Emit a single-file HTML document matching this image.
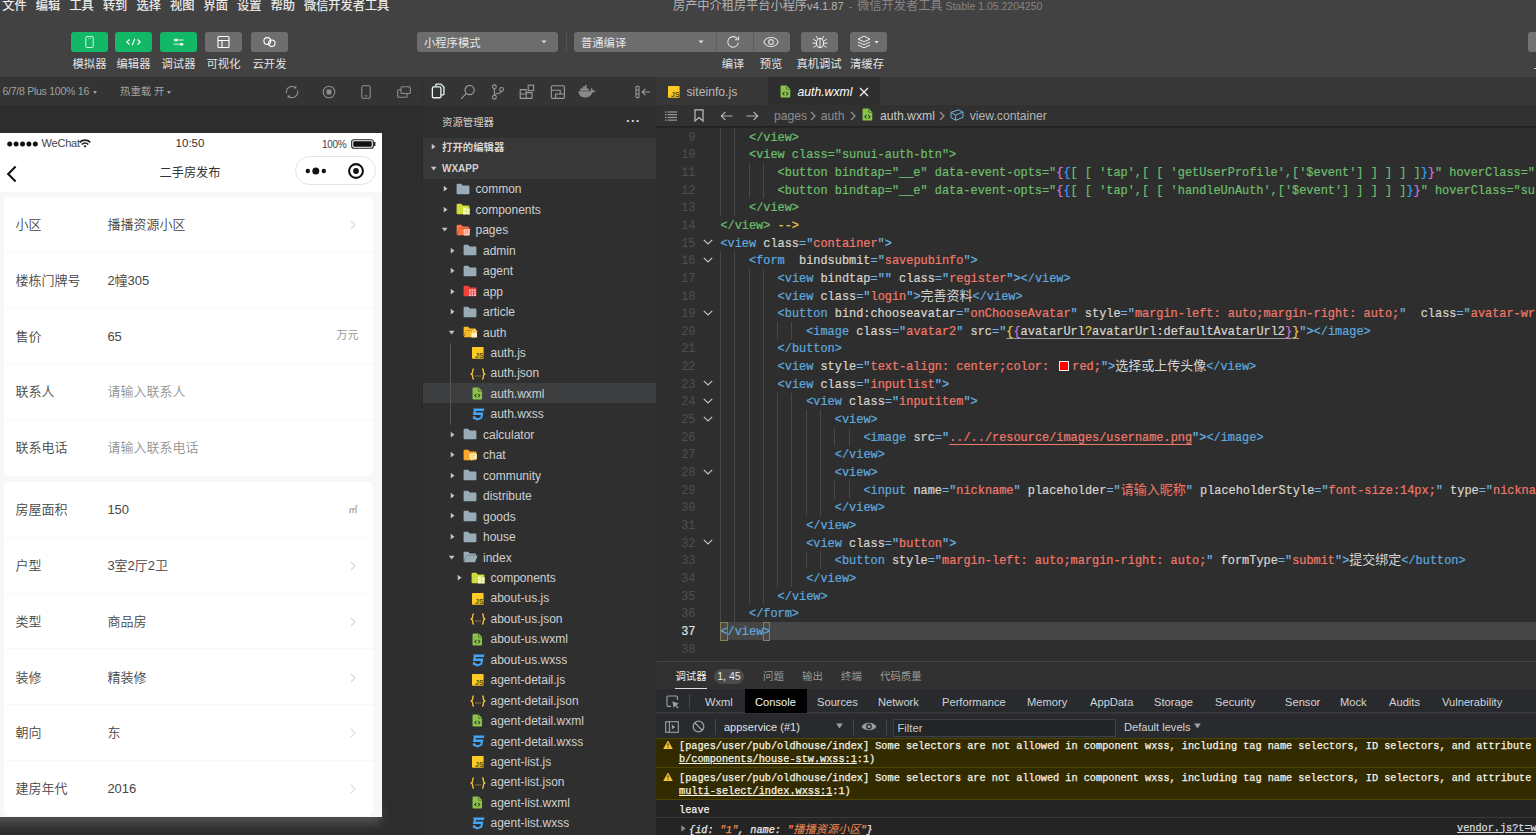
<!DOCTYPE html>
<html lang="zh-CN"><head><meta charset="utf-8"><title>微信开发者工具</title>
<style>
*{box-sizing:border-box;margin:0;padding:0}
html,body{width:1536px;height:835px;overflow:hidden;background:#2e2e2e}
body{position:relative;font-family:"Liberation Sans","Noto Sans CJK SC",sans-serif;font-size:12px;color:#ccc;-webkit-font-smoothing:antialiased}
.abs{position:absolute}
.t{position:absolute;white-space:nowrap;line-height:1}
svg{position:absolute;overflow:visible}
/* top */
#topbar{left:0;top:0;width:1536px;height:77px;background:#424242}
.menu{top:-1.4px;-webkit-text-stroke-width:0.2px;font-size:12.2px;color:#f0f0f0;line-height:14px}
.tbtn{top:32px;height:20px;border-radius:3px;background:#12b865}
.tbtn.g{background:#6e6e6e}
.tlab{top:57px;font-size:11.3px;color:#e4e4e4;line-height:14px;text-align:center}
.sel{top:32px;height:20px;border-radius:3px;background:#6d6d6d}
/* sim */
#simbar{left:0;top:77px;width:422px;height:28px;background:#343434}
#simbg{left:0;top:105px;width:422px;height:730px;background:#2d2d2d}
#phone{left:0;top:133px;width:382px;height:684.3px;background:#f7f7f7;overflow:hidden;color:#333}
.card{position:absolute;left:4.4px;width:368.6px;background:#fff;border-radius:5px}
.row{position:absolute;left:0;width:369px;height:55.7px}
.row .l{position:absolute;left:11px;top:0;line-height:55.7px;font-size:13px;color:#464646;font-weight:350}
.row .v{position:absolute;left:103px;top:0;line-height:55.7px;font-size:13px;color:#464646;font-weight:350}
.row .v.ph{color:#939393}
.row .u{position:absolute;right:15px;top:-1px;line-height:55.7px;font-size:11px;color:#999}
.row .sep{position:absolute;left:0;right:0;bottom:0.3px;height:1px;background:#f7f7f7}
/* tree */
#explorer{left:423px;top:77px;width:233px;height:758px;background:#2f2f2f}
.trow{position:absolute;left:0;width:233px;height:20.45px}
.trow .n{position:absolute;top:0;line-height:20.45px;font-size:12px;color:#d0d0d0;white-space:nowrap}
/* editor */
#tabs{left:656px;top:77px;width:880px;height:27.7px;background:#373737}
#crumbs{left:656px;top:104.5px;width:880px;height:21.5px;background:#313131}
#code{left:656px;top:127.9px;width:880px;height:532px;background:#2e2e2e;overflow:hidden}
.ln{position:absolute;left:0;width:880px;height:17.65px;line-height:17.65px;font-family:"Liberation Mono",monospace;font-size:11.915px;white-space:pre;color:#d4d4d4}
.ln .no{position:absolute;left:0;top:1.8px;width:39.5px;text-align:right;color:#4e4e4e}
.ln .cd{position:absolute;left:65px;top:1.8px;-webkit-text-stroke-width:0.22px}
.ln .cj{font-family:"Noto Sans CJK SC",sans-serif;font-size:13px;line-height:1px;-webkit-text-stroke-width:0}
.c{color:#6cbd6c}.tg{color:#5ea8de}.at{color:#d6d4cc}.st{color:#f0786a}.pu{color:#6fb4e4}
.b1{color:#e6c84a}.b2{color:#d670d6}.b3{color:#2f9fff}
.ul{text-decoration:underline;text-underline-offset:2.5px;text-decoration-thickness:1.4px}
.gd{position:absolute;top:0;width:1px;height:17.65px;background:#484848}
/* debug */
#dbg{left:656px;top:661px;width:880px;height:174px;background:#313131}
.mono{font-family:"Liberation Mono",monospace}
.bx{outline:1px solid #8a7d5c;outline-offset:-1px;background:#4a4a44;padding:2.6px 0 2px}
.car{display:inline-block;width:0;height:0;border-left:2.7px solid transparent;border-right:2.7px solid transparent;border-top:3.4px solid #a0a0a0;vertical-align:1px}

</style></head>
<body>
<div id="topbar" class="abs">
<span class="t menu" style="left:2.3px">文件</span>
<span class="t menu" style="left:35.8px">编辑</span>
<span class="t menu" style="left:69.4px">工具</span>
<span class="t menu" style="left:102.9px">转到</span>
<span class="t menu" style="left:136.5px">选择</span>
<span class="t menu" style="left:170.1px">视图</span>
<span class="t menu" style="left:203.6px">界面</span>
<span class="t menu" style="left:237.1px">设置</span>
<span class="t menu" style="left:270.7px">帮助</span>
<span class="t menu" style="left:304px">微信开发者工具</span>
<span class="t menu" style="left:673px;top:-1px;color:#b4b4b4;-webkit-text-stroke-width:0">房产中介租房平台小程序<span style="font-size:11.2px">v4.1.87</span><span style="color:#858585"> <span style="font-size:11px;padding:0 1.5px">-</span> 微信开发者工具<span style="font-size:10.5px"> Stable 1.05.2204250</span></span></span>
<div class="abs tbtn " style="left:71px;width:37px"><svg width="37" height="20" viewBox="0 0 37 20" style="left:0;top:0"><rect x="14.8" y="4.5" width="7.4" height="11" rx="1" fill="none" stroke="#d4f6e4" stroke-width="1"/><line x1="17" y1="6.4" x2="20" y2="6.4" stroke="#d4f6e4" stroke-width="0.7" opacity=".8"/></svg></div>
<span class="t tlab" style="left:61px;width:57px">模拟器</span>
<div class="abs tbtn " style="left:115px;width:37px"><svg width="37" height="20" viewBox="0 0 37 20" style="left:0;top:0"><path d="M14.5 7.5 L11.8 10 L14.5 12.5 M22.5 7.5 L25.2 10 L22.5 12.5 M19.8 6.8 L17.2 13.2" fill="none" stroke="#fff" stroke-width="1.1"/></svg></div>
<span class="t tlab" style="left:105px;width:57px">编辑器</span>
<div class="abs tbtn " style="left:160px;width:37px"><svg width="37" height="20" viewBox="0 0 37 20" style="left:0;top:0"><path d="M13.5 8 H23.5 M13.5 12.2 H23.5" fill="none" stroke="#d8f5e6" stroke-width="1"/><circle cx="16" cy="8" r="1.5" fill="#fff"/><circle cx="21.5" cy="12.2" r="1.5" fill="#fff"/></svg></div>
<span class="t tlab" style="left:150px;width:57px">调试器</span>
<div class="abs tbtn g" style="left:205px;width:37px"><svg width="37" height="20" viewBox="0 0 37 20" style="left:0;top:0"><rect x="13" y="4.5" width="11" height="11" rx="1" fill="none" stroke="#fff" stroke-width="1.1"/><path d="M13 8.5 H24 M17 8.5 V15.5" stroke="#fff" stroke-width="1.1" fill="none"/></svg></div>
<span class="t tlab" style="left:195px;width:57px">可视化</span>
<div class="abs tbtn g" style="left:251px;width:37px"><svg width="37" height="20" viewBox="0 0 37 20" style="left:0;top:0"><circle cx="16.3" cy="9" r="3.4" fill="none" stroke="#fff" stroke-width="1.1"/><circle cx="20.8" cy="11.2" r="3.2" fill="none" stroke="#fff" stroke-width="1.1"/></svg></div>
<span class="t tlab" style="left:241px;width:57px">云开发</span>
<div class="abs sel" style="left:417px;width:141px"></div>
<span class="t" style="left:424px;top:36px;font-size:11.3px;line-height:14px;color:#e6e6e6">小程序模式</span>
<svg width="6.4" height="4" viewBox="0 0 8 5" style="left:540.8px;top:40.3px"><path d="M0.5 0.5 L7 0.5 L3.75 4.2 Z" fill="#e0e0e0"/></svg>
<div class="abs" style="left:565.5px;top:32px;width:1px;height:20px;background:#545454"></div>
<div class="abs sel" style="left:574px;width:216px"></div>
<span class="t" style="left:581px;top:36px;font-size:11.3px;line-height:14px;color:#e6e6e6">普通编译</span>
<svg width="6.4" height="4" viewBox="0 0 8 5" style="left:698px;top:40.3px"><path d="M0.5 0.5 L7 0.5 L3.75 4.2 Z" fill="#e0e0e0"/></svg>
<div class="abs" style="left:715.5px;top:32px;width:1px;height:20px;background:#5e5e5e"></div>
<div class="abs" style="left:753px;top:32px;width:1px;height:20px;background:#5e5e5e"></div>
<svg width="16" height="16" viewBox="0 0 16 16" style="left:725px;top:34px"><path d="M12.6 5.2 A5.3 5.3 0 1 0 13.3 8.6" fill="none" stroke="#dcdcdc" stroke-width="1.1"/><path d="M13.6 2.2 V5.8 H10" fill="none" stroke="#dcdcdc" stroke-width="1.1"/></svg>
<svg width="18" height="14" viewBox="0 0 18 14" style="left:762px;top:35px"><path d="M1.8 7 C4.4 1 13.6 1 16.2 7 C13.6 13 4.4 13 1.8 7 Z" fill="none" stroke="#dcdcdc" stroke-width="1.1"/><circle cx="9" cy="7" r="2.4" fill="none" stroke="#dcdcdc" stroke-width="1.1"/></svg>
<span class="t tlab" style="left:713px;width:40px">编译</span>
<span class="t tlab" style="left:751px;width:40px">预览</span>
<div class="abs sel" style="left:801px;width:37px"></div>
<svg width="20" height="18" viewBox="0 0 20 18" style="left:809.5px;top:33px"><ellipse cx="10" cy="10" rx="3.6" ry="4.6" fill="none" stroke="#eee" stroke-width="1.1"/><path d="M10 5.5 V14.5 M6.4 8 L3.2 6.2 M6.4 10.2 H2.6 M6.5 12.4 L3.4 14.4 M13.6 8 L16.8 6.2 M13.6 10.2 H17.4 M13.5 12.4 L16.6 14.4 M7.6 5.6 L6.4 3.2 M12.4 5.6 L13.6 3.2" fill="none" stroke="#eee" stroke-width="1"/></svg>
<span class="t tlab" style="left:789px;width:60px">真机调试</span>
<div class="abs sel" style="left:849.5px;width:37px"></div>
<svg width="22" height="16" viewBox="0 0 22 16" style="left:855.5px;top:34px"><path d="M8 2.2 L14 5 L8 7.8 L2 5 Z" fill="none" stroke="#eee" stroke-width="1"/><path d="M2 8 L8 10.8 L14 8 M2 11 L8 13.8 L14 11" fill="none" stroke="#eee" stroke-width="1"/><path d="M18.6 7 L22.6 7 L20.6 9.4 Z" fill="#eee"/></svg>
<span class="t tlab" style="left:837px;width:60px">清缓存</span>
<div class="abs" style="left:1528px;top:32px;width:12px;height:20px;border-radius:3px;background:#727272"></div>
<div class="abs" style="left:1534px;top:67.6px;width:3px;height:1.4px;background:#d8d8d8"></div>
</div>
<div id="simbar" class="abs">
<span class="t" style="left:2.5px;top:8px;font-size:10.6px;line-height:13px;color:#a0a0a0;letter-spacing:-0.3px">6/7/8 Plus 100% 16<i class="car" style="margin-left:4px"></i></span>
<span class="t" style="left:120px;top:8px;font-size:10.4px;line-height:13px;color:#a0a0a0">热重载 开<i class="car" style="margin-left:3px"></i></span>
<svg width="14" height="14" viewBox="0 0 14 14" style="left:285px;top:8px"><path d="M1.6 8.4 A5.6 5.6 0 0 1 10.6 2.7 M12.4 5.6 A5.6 5.6 0 0 1 3.4 11.3" fill="none" stroke="#8c8c8c" stroke-width="1.2"/><path d="M8.4 3.4 L11.4 3.4 L11.2 0.6 Z M5.6 10.6 L2.6 10.6 L2.8 13.4 Z" fill="#8c8c8c"/></svg>
<svg width="14" height="14" viewBox="0 0 14 14" style="left:322px;top:8px"><circle cx="7" cy="7" r="5.8" fill="none" stroke="#8e8e8e" stroke-width="1.1"/><rect x="4.6" y="4.6" width="4.8" height="4.8" rx=".6" fill="#8e8e8e"/></svg>
<svg width="10" height="14" viewBox="0 0 10 14" style="left:361px;top:8px"><rect x="0.8" y="0.8" width="8.4" height="12.4" rx="1.3" fill="none" stroke="#8e8e8e" stroke-width="1.1"/><path d="M3.6 10.9 H6.4" stroke="#8e8e8e" stroke-width="1"/></svg>
<svg width="14" height="12" viewBox="0 0 14 12" style="left:396.5px;top:9px"><rect x="4" y="0.7" width="9.3" height="6.8" rx="1" fill="none" stroke="#8e8e8e" stroke-width="1.1"/><path d="M4 3.8 H1.7 A1 1 0 0 0 0.7 4.8 V10.3 A1 1 0 0 0 1.7 11.3 H9 A1 1 0 0 0 10 10.3 V7.5" fill="none" stroke="#8e8e8e" stroke-width="1.1"/></svg>
</div>
<div id="simbg" class="abs"></div>
<div class="abs" style="left:-20px;top:804px;width:401px;height:20px;background:#505050;filter:blur(5px)"></div>
<div class="abs" style="left:422px;top:105px;width:1px;height:730px;background:#282828"></div>
<div id="phone" class="abs">
<div class="abs" style="left:0;top:0;width:382px;height:59px;background:#fff"></div>
<svg width="34" height="6" viewBox="0 0 34 6" style="left:6.7px;top:7.6px"><circle cx="2.7" cy="3" r="2.5" fill="#111"/><circle cx="9.1" cy="3" r="2.5" fill="#111"/><circle cx="15.5" cy="3" r="2.5" fill="#111"/><circle cx="21.9" cy="3" r="2.5" fill="#111"/><circle cx="28.3" cy="3" r="2.5" fill="#111"/></svg>
<span class="t" style="left:41.5px;top:4px;font-size:11px;line-height:13px;color:#444;letter-spacing:-0.2px">WeChat</span>
<svg width="12" height="9" viewBox="0 0 12 9" style="left:79px;top:6px"><path d="M0.7 3.3 A7.6 7.6 0 0 1 11.3 3.3" fill="none" stroke="#222" stroke-width="1.8"/><path d="M2.7 5.5 A4.8 4.8 0 0 1 9.3 5.5" fill="none" stroke="#222" stroke-width="1.7"/><path d="M4.4 7 L6 8.8 L7.6 7 A2.4 2.4 0 0 0 4.4 7 Z" fill="#222"/></svg>
<span class="t" style="left:160px;width:60px;text-align:center;top:4px;font-size:11.5px;line-height:13px;color:#333">10:50</span>
<span class="t" style="left:322px;top:5px;font-size:10px;line-height:13px;color:#444;letter-spacing:-0.3px">100%</span>
<svg width="26" height="10" viewBox="0 0 26 10" style="left:351px;top:6px"><rect x="0.7" y="0.7" width="21.6" height="8.6" rx="2" fill="none" stroke="#222" stroke-width="1.1"/><rect x="2.3" y="2.3" width="18.4" height="5.4" rx=".8" fill="#111"/><path d="M23.6 3.5 V6.5" stroke="#222" stroke-width="1.6" stroke-linecap="round"/></svg>
<svg width="12" height="18" viewBox="0 0 12 18" style="left:5.5px;top:32px"><path d="M9.6 1.6 L2.2 9 L9.6 16.4" fill="none" stroke="#111" stroke-width="2.1"/></svg>
<span class="t" style="left:120px;width:140px;text-align:center;top:33px;font-size:12.2px;line-height:15px;color:#333">二手房发布</span>
<div class="abs" style="left:295px;top:22.5px;width:80.5px;height:29.5px;border:1px solid #e4e4e4;border-radius:15px;background:#fff"></div>
<svg width="22" height="8" viewBox="0 0 22 8" style="left:304.5px;top:33.7px"><circle cx="2.8" cy="4" r="2.2" fill="#111"/><circle cx="10.8" cy="4" r="3.5" fill="#111"/><circle cx="18.8" cy="4" r="2.2" fill="#111"/></svg>
<svg width="18" height="18" viewBox="0 0 18 18" style="left:346.8px;top:28.7px"><circle cx="9" cy="9" r="6.9" fill="none" stroke="#111" stroke-width="2.1"/><circle cx="9" cy="9" r="2.9" fill="#111"/></svg>
<div class="card" style="top:64.0px;height:278.5px">
<div class="row" style="top:0.3px"><span class="l">小区</span><span class="v">播播资源小区</span><svg width="6" height="10" viewBox="0 0 6 10" style="right:17px;top:23px;left:auto"><path d="M1 1 L5 5 L1 9" fill="none" stroke="#dcdcdc" stroke-width="1.3"/></svg><i class="sep"></i></div>
<div class="row" style="top:56.0px"><span class="l">楼栋门牌号</span><span class="v">2幢305</span><i class="sep"></i></div>
<div class="row" style="top:111.7px"><span class="l">售价</span><span class="v">65</span><span class="u">万元</span><i class="sep"></i></div>
<div class="row" style="top:167.4px"><span class="l">联系人</span><span class="v ph">请输入联系人</span><i class="sep"></i></div>
<div class="row" style="top:223.1px"><span class="l">联系电话</span><span class="v ph">请输入联系电话</span></div>
</div>
<div class="card" style="top:349.2px;height:334.2px">
<div class="row" style="top:0.3px"><span class="l">房屋面积</span><span class="v">150</span><span class="u" style="font-size:9px;color:#858585;right:16px;top:1px">㎡</span><i class="sep"></i></div>
<div class="row" style="top:56.0px"><span class="l">户型</span><span class="v">3室2厅2卫</span><svg width="6" height="10" viewBox="0 0 6 10" style="right:17px;top:23px;left:auto"><path d="M1 1 L5 5 L1 9" fill="none" stroke="#dcdcdc" stroke-width="1.3"/></svg><i class="sep"></i></div>
<div class="row" style="top:111.7px"><span class="l">类型</span><span class="v">商品房</span><svg width="6" height="10" viewBox="0 0 6 10" style="right:17px;top:23px;left:auto"><path d="M1 1 L5 5 L1 9" fill="none" stroke="#dcdcdc" stroke-width="1.3"/></svg><i class="sep"></i></div>
<div class="row" style="top:167.4px"><span class="l">装修</span><span class="v">精装修</span><svg width="6" height="10" viewBox="0 0 6 10" style="right:17px;top:23px;left:auto"><path d="M1 1 L5 5 L1 9" fill="none" stroke="#dcdcdc" stroke-width="1.3"/></svg><i class="sep"></i></div>
<div class="row" style="top:223.1px"><span class="l">朝向</span><span class="v">东</span><svg width="6" height="10" viewBox="0 0 6 10" style="right:17px;top:23px;left:auto"><path d="M1 1 L5 5 L1 9" fill="none" stroke="#dcdcdc" stroke-width="1.3"/></svg><i class="sep"></i></div>
<div class="row" style="top:278.8px"><span class="l">建房年代</span><span class="v">2016</span><svg width="6" height="10" viewBox="0 0 6 10" style="right:17px;top:23px;left:auto"><path d="M1 1 L5 5 L1 9" fill="none" stroke="#dcdcdc" stroke-width="1.3"/></svg></div>
</div>
</div>
<div id="explorer" class="abs">
<div class="abs" style="left:0;top:0;width:233px;height:28px;background:#343434"></div>
<svg width="14.5" height="16" viewBox="0 0 16 18" style="left:7.5px;top:5.8px"><path d="M5.2 3.8 V2.2 A1 1 0 0 1 6.2 1.2 H11 L14.4 4.6 V12.4 A1 1 0 0 1 13.4 13.4 H11.4" fill="none" stroke="#e6f2f4" stroke-width="1.5"/><rect x="1.4" y="4.4" width="9.6" height="12.2" rx="1.2" fill="none" stroke="#e6f2f4" stroke-width="1.5"/></svg>
<svg width="16" height="16" viewBox="0 0 16 16" style="left:37px;top:6.5px"><circle cx="9.6" cy="6" r="4.6" fill="none" stroke="#9a9a9a" stroke-width="1.2"/><path d="M6.4 9.4 L1.2 14.8" stroke="#9a9a9a" stroke-width="1.2"/></svg>
<svg width="14" height="16" viewBox="0 0 14 16" style="left:67.5px;top:6.5px"><circle cx="3.4" cy="2.8" r="1.9" fill="none" stroke="#9a9a9a" stroke-width="1.1"/><circle cx="3.4" cy="13.2" r="1.9" fill="none" stroke="#9a9a9a" stroke-width="1.1"/><circle cx="10.6" cy="5.4" r="1.9" fill="none" stroke="#9a9a9a" stroke-width="1.1"/><path d="M3.4 4.7 V11.3 M10.6 7.3 C10.6 10 3.4 9 3.4 11.3" fill="none" stroke="#9a9a9a" stroke-width="1.1"/></svg>
<svg width="16" height="16" viewBox="0 0 16 16" style="left:96px;top:6.5px"><path d="M1.2 5.6 H7.2 V14.4 H1.2 Z M7.2 8.6 H13 V14.4 H7.2 M1.2 10 H7.2" fill="none" stroke="#9a9a9a" stroke-width="1.1"/><rect x="9.2" y="1.2" width="5.4" height="5.4" fill="none" stroke="#9a9a9a" stroke-width="1.1"/></svg>
<svg width="16" height="16" viewBox="0 0 16 16" style="left:127px;top:6.5px"><rect x="1.4" y="1.8" width="13" height="12.6" rx="1" fill="none" stroke="#9a9a9a" stroke-width="1.1"/><path d="M1.4 6.2 H10.2 V10 H5.6 V14.4 M10.2 10 H14.4" fill="none" stroke="#9a9a9a" stroke-width="1.1"/></svg>
<svg width="18" height="13" viewBox="0 0 18 13" style="left:154.5px;top:7.5px"><path d="M0.5 6.2 H12.4 C12.8 5 12.6 3.8 13.6 2.8 C14.6 3.6 14.8 4.6 14.6 5.4 C15.6 5.2 16.8 5.4 17.6 6 C16.8 7.2 15.6 7.4 14.4 7.4 C13.2 10.6 10.6 12.4 6.8 12.4 C3 12.4 0.7 10 0.5 6.2 Z" fill="#8a8a8a"/><path d="M2.2 3.6 H10.8 V5.8 H2.2 Z M4.6 1.4 H8.6 V3.6 H4.6 Z M7.2 0 H8.8 V1.6 H7.2 Z" fill="#8a8a8a"/></svg>
<svg width="16" height="14" viewBox="0 0 16 14" style="left:211.5px;top:8px"><rect x="1" y="1.2" width="3" height="11.4" rx=".8" fill="none" stroke="#9a9a9a" stroke-width="1.1"/><path d="M1 5 H4 M1 8.8 H4" stroke="#9a9a9a" stroke-width="1"/><path d="M15 7 H7.4 M10.4 3.8 L7.2 7 L10.4 10.2" fill="none" stroke="#9a9a9a" stroke-width="1.2"/></svg>
<span class="t" style="left:19px;top:39px;font-size:10.4px;line-height:14px;color:#cfcfcf">资源管理器</span>
<span class="t" style="left:203px;top:38px;font-size:13px;line-height:12px;color:#d8d8d8;letter-spacing:0.6px;font-weight:bold">···</span>
<div class="abs" style="left:0;top:60.5px;width:233px;height:41px;background:#383838"></div>
<div class="trow" style="top:60.5px"><svg width="5.4" height="7.4" viewBox="0 0 6 8" style="left:7.5px;top:5.9px"><path d="M0.8 0.8 L5 4 L0.8 7.2 Z" fill="#c4c4c4"/></svg><span class="n" style="left:19px;font-size:10.4px;font-weight:bold;color:#d4d4d4">打开的编辑器</span></div>
<div class="trow" style="top:82px"><svg width="7.4" height="5.4" viewBox="0 0 8 6" style="left:6.5px;top:7px"><path d="M0.8 0.8 L7.2 0.8 L4 5 Z" fill="#c4c4c4"/></svg><span class="n" style="left:19px;font-size:10px;font-weight:bold;color:#d0d0d0">WXAPP</span></div>
<div class="trow" style="top:102.40px"><svg width="5.4" height="7.4" viewBox="0 0 6 8" style="left:19.5px;top:5.9px"><path d="M0.8 0.8 L5 4 L0.8 7.2 Z" fill="#c4c4c4"/></svg><svg width="14" height="12" viewBox="0 0 14 12" style="left:33px;top:3.6px"><path d="M0.6 1.8 A1 1 0 0 1 1.6 0.8 H5.2 L6.8 2.4 H12.4 A1 1 0 0 1 13.4 3.4 V10.2 A1 1 0 0 1 12.4 11.2 H1.6 A1 1 0 0 1 0.6 10.2 Z" fill="#98abb7"/></svg><span class="n" style="left:52.5px">common</span></div>
<div class="trow" style="top:122.85px"><svg width="5.4" height="7.4" viewBox="0 0 6 8" style="left:19.5px;top:5.9px"><path d="M0.8 0.8 L5 4 L0.8 7.2 Z" fill="#c4c4c4"/></svg><svg width="14" height="12" viewBox="0 0 14 12" style="left:33px;top:3.6px"><path d="M0.6 1.8 A1 1 0 0 1 1.6 0.8 H5.2 L6.8 2.4 H12.4 A1 1 0 0 1 13.4 3.4 V10.2 A1 1 0 0 1 12.4 11.2 H1.6 A1 1 0 0 1 0.6 10.2 Z" fill="#cddc39"/><path d="M7 4.6 H10.2 V7.6 H7 Z M10.6 5.6 H13.8 V8.8 H10.6 Z M7 8 H10.2 V11.6 H7 Z M10.6 9.2 H13.8 V11.6 H10.6 Z" fill="#f2f6c0"/></svg><span class="n" style="left:52.5px">components</span></div>
<div class="trow" style="top:143.30px"><svg width="7.4" height="5.4" viewBox="0 0 8 6" style="left:18.0px;top:7px"><path d="M0.8 0.8 L7.2 0.8 L4 5 Z" fill="#c4c4c4"/></svg><svg width="15" height="12" viewBox="0 0 15 12" style="left:33px;top:3.6px"><path d="M0.6 1.8 A1 1 0 0 1 1.6 0.8 H5.2 L6.8 2.4 H12 A1 1 0 0 1 13 3.4 V4.4 H3.6 L0.6 10.6 Z" fill="#ff7043"/><path d="M3.4 4.6 H14.6 L12.2 11.2 H0.8 Z" fill="#ff7043"/><rect x="7.6" y="5" width="6.2" height="6.6" rx=".8" fill="#ffccbc"/><path d="M8.8 7 H12.6 M8.8 9 H12.6" stroke="#ff7043" stroke-width=".9"/></svg><span class="n" style="left:52.5px">pages</span></div>
<div class="trow" style="top:163.75px"><svg width="5.4" height="7.4" viewBox="0 0 6 8" style="left:26.5px;top:5.9px"><path d="M0.8 0.8 L5 4 L0.8 7.2 Z" fill="#c4c4c4"/></svg><svg width="14" height="12" viewBox="0 0 14 12" style="left:40px;top:3.6px"><path d="M0.6 1.8 A1 1 0 0 1 1.6 0.8 H5.2 L6.8 2.4 H12.4 A1 1 0 0 1 13.4 3.4 V10.2 A1 1 0 0 1 12.4 11.2 H1.6 A1 1 0 0 1 0.6 10.2 Z" fill="#98abb7"/></svg><span class="n" style="left:60px">admin</span></div>
<div class="trow" style="top:184.20px"><svg width="5.4" height="7.4" viewBox="0 0 6 8" style="left:26.5px;top:5.9px"><path d="M0.8 0.8 L5 4 L0.8 7.2 Z" fill="#c4c4c4"/></svg><svg width="14" height="12" viewBox="0 0 14 12" style="left:40px;top:3.6px"><path d="M0.6 1.8 A1 1 0 0 1 1.6 0.8 H5.2 L6.8 2.4 H12.4 A1 1 0 0 1 13.4 3.4 V10.2 A1 1 0 0 1 12.4 11.2 H1.6 A1 1 0 0 1 0.6 10.2 Z" fill="#98abb7"/></svg><span class="n" style="left:60px">agent</span></div>
<div class="trow" style="top:204.65px"><svg width="5.4" height="7.4" viewBox="0 0 6 8" style="left:26.5px;top:5.9px"><path d="M0.8 0.8 L5 4 L0.8 7.2 Z" fill="#c4c4c4"/></svg><svg width="14" height="12" viewBox="0 0 14 12" style="left:40px;top:3.6px"><path d="M0.6 1.8 A1 1 0 0 1 1.6 0.8 H5.2 L6.8 2.4 H12.4 A1 1 0 0 1 13.4 3.4 V10.2 A1 1 0 0 1 12.4 11.2 H1.6 A1 1 0 0 1 0.6 10.2 Z" fill="#f4433c"/><path d="M6 4.6 H12.8 V11 H6 Z" fill="#ffcdd2"/><path d="M6 6.7 H12.8 M6 8.9 H12.8 M8.2 4.6 V11 M10.5 4.6 V11" stroke="#f4433c" stroke-width=".9"/></svg><span class="n" style="left:60px">app</span></div>
<div class="trow" style="top:225.10px"><svg width="5.4" height="7.4" viewBox="0 0 6 8" style="left:26.5px;top:5.9px"><path d="M0.8 0.8 L5 4 L0.8 7.2 Z" fill="#c4c4c4"/></svg><svg width="14" height="12" viewBox="0 0 14 12" style="left:40px;top:3.6px"><path d="M0.6 1.8 A1 1 0 0 1 1.6 0.8 H5.2 L6.8 2.4 H12.4 A1 1 0 0 1 13.4 3.4 V10.2 A1 1 0 0 1 12.4 11.2 H1.6 A1 1 0 0 1 0.6 10.2 Z" fill="#98abb7"/></svg><span class="n" style="left:60px">article</span></div>
<div class="trow" style="top:245.55px"><svg width="7.4" height="5.4" viewBox="0 0 8 6" style="left:25.0px;top:7px"><path d="M0.8 0.8 L7.2 0.8 L4 5 Z" fill="#c4c4c4"/></svg><svg width="15" height="12" viewBox="0 0 15 12" style="left:40px;top:3.6px"><path d="M0.6 1.8 A1 1 0 0 1 1.6 0.8 H5.2 L6.8 2.4 H12 A1 1 0 0 1 13 3.4 V4.4 H3.6 L0.6 10.6 Z" fill="#f9b72a"/><path d="M3.4 4.6 H14.6 L12.2 11.2 H0.8 Z" fill="#f9b72a"/><rect x="8.4" y="6.8" width="5.6" height="4.8" rx=".6" fill="#fff3c4"/><path d="M9.6 6.8 V5.6 A1.6 1.6 0 0 1 12.8 5.6 V6.8" fill="none" stroke="#fff3c4" stroke-width="1"/></svg><span class="n" style="left:60px">auth</span></div>
<div class="trow" style="top:266.00px"><svg width="12" height="12" viewBox="0 0 12 12" style="left:48.5px;top:4.2px"><rect x="0" y="0" width="11.6" height="11.8" rx=".8" fill="#ffca28"/><text x="3" y="10.6" font-family="Liberation Sans,sans-serif" font-size="7" font-weight="bold" fill="#5a4700">JS</text></svg><span class="n" style="left:67.5px">auth.js</span></div>
<div class="trow" style="top:286.45px"><svg width="16" height="12" viewBox="0 0 16 12" style="left:46.5px;top:4.2px"><path d="M4 0.8 C2.2 0.8 2.8 3 2.6 4.4 C2.5 5.4 1.6 5.8 0.8 6 C1.6 6.2 2.5 6.6 2.6 7.6 C2.8 9 2.2 11.2 4 11.2 M12 0.8 C13.8 0.8 13.2 3 13.4 4.4 C13.5 5.4 14.4 5.8 15.2 6 C14.4 6.2 13.5 6.6 13.4 7.6 C13.2 9 13.8 11.2 12 11.2" fill="none" stroke="#f5bf36" stroke-width="1.3"/><path d="M5.4 8 H6.4 M7.5 8 H8.5 M9.6 8 H10.6" stroke="#f5bf36" stroke-width="1.2"/></svg><span class="n" style="left:67.5px">auth.json</span></div>
<div class="abs" style="left:0;top:305.80px;width:233px;height:20.6px;background:#3d3e40"></div>
<div class="trow" style="top:306.90px"><svg width="10.6" height="13" viewBox="0 0 12 14" preserveAspectRatio="none" style="left:48.5px;top:3.4px"><path d="M1.6 0.6 H7.6 L11.4 4.4 V12.4 A1 1 0 0 1 10.4 13.4 H1.6 A1 1 0 0 1 0.6 12.4 V1.6 A1 1 0 0 1 1.6 0.6 Z" fill="#8bc34a"/><path d="M7.4 0.8 V4.6 H11.2" fill="none" stroke="#3a5a1c" stroke-width=".7"/><path d="M5 7.4 L3.2 9.2 L5 11 M7 7.4 L8.8 9.2 L7 11" fill="none" stroke="#24401a" stroke-width="1.1"/></svg><span class="n" style="left:67.5px">auth.wxml</span></div>
<div class="trow" style="top:327.35px"><svg width="14" height="13" viewBox="0 0 14 13" style="left:47.5px;top:3.8px"><path d="M1.6 0.6 H13.4 L12.8 3 H4.8 L4.5 4.6 H12.4 L11.2 10.6 L6.4 12.4 L1.6 10.6 L2.1 8.2 H4.4 L4.2 9.2 L6.8 10.2 L9.4 9.2 L9.8 7 H1.8 L2.9 1.8 Z" fill="#42a5f5"/></svg><span class="n" style="left:67.5px">auth.wxss</span></div>
<div class="trow" style="top:347.80px"><svg width="5.4" height="7.4" viewBox="0 0 6 8" style="left:26.5px;top:5.9px"><path d="M0.8 0.8 L5 4 L0.8 7.2 Z" fill="#c4c4c4"/></svg><svg width="14" height="12" viewBox="0 0 14 12" style="left:40px;top:3.6px"><path d="M0.6 1.8 A1 1 0 0 1 1.6 0.8 H5.2 L6.8 2.4 H12.4 A1 1 0 0 1 13.4 3.4 V10.2 A1 1 0 0 1 12.4 11.2 H1.6 A1 1 0 0 1 0.6 10.2 Z" fill="#98abb7"/></svg><span class="n" style="left:60px">calculator</span></div>
<div class="trow" style="top:368.25px"><svg width="5.4" height="7.4" viewBox="0 0 6 8" style="left:26.5px;top:5.9px"><path d="M0.8 0.8 L5 4 L0.8 7.2 Z" fill="#c4c4c4"/></svg><svg width="14" height="12" viewBox="0 0 14 12" style="left:40px;top:3.6px"><path d="M0.6 1.8 A1 1 0 0 1 1.6 0.8 H5.2 L6.8 2.4 H12.4 A1 1 0 0 1 13.4 3.4 V10.2 A1 1 0 0 1 12.4 11.2 H1.6 A1 1 0 0 1 0.6 10.2 Z" fill="#ffa726"/><path d="M6.6 4.6 H13.8 V10 H10 L8.4 12 V10 H6.6 Z" fill="#fff0b8"/><path d="M8 6.4 H12.4 M8 8 H11.4" stroke="#ffb74d" stroke-width=".7"/></svg><span class="n" style="left:60px">chat</span></div>
<div class="trow" style="top:388.70px"><svg width="5.4" height="7.4" viewBox="0 0 6 8" style="left:26.5px;top:5.9px"><path d="M0.8 0.8 L5 4 L0.8 7.2 Z" fill="#c4c4c4"/></svg><svg width="14" height="12" viewBox="0 0 14 12" style="left:40px;top:3.6px"><path d="M0.6 1.8 A1 1 0 0 1 1.6 0.8 H5.2 L6.8 2.4 H12.4 A1 1 0 0 1 13.4 3.4 V10.2 A1 1 0 0 1 12.4 11.2 H1.6 A1 1 0 0 1 0.6 10.2 Z" fill="#98abb7"/></svg><span class="n" style="left:60px">community</span></div>
<div class="trow" style="top:409.15px"><svg width="5.4" height="7.4" viewBox="0 0 6 8" style="left:26.5px;top:5.9px"><path d="M0.8 0.8 L5 4 L0.8 7.2 Z" fill="#c4c4c4"/></svg><svg width="14" height="12" viewBox="0 0 14 12" style="left:40px;top:3.6px"><path d="M0.6 1.8 A1 1 0 0 1 1.6 0.8 H5.2 L6.8 2.4 H12.4 A1 1 0 0 1 13.4 3.4 V10.2 A1 1 0 0 1 12.4 11.2 H1.6 A1 1 0 0 1 0.6 10.2 Z" fill="#98abb7"/></svg><span class="n" style="left:60px">distribute</span></div>
<div class="trow" style="top:429.60px"><svg width="5.4" height="7.4" viewBox="0 0 6 8" style="left:26.5px;top:5.9px"><path d="M0.8 0.8 L5 4 L0.8 7.2 Z" fill="#c4c4c4"/></svg><svg width="14" height="12" viewBox="0 0 14 12" style="left:40px;top:3.6px"><path d="M0.6 1.8 A1 1 0 0 1 1.6 0.8 H5.2 L6.8 2.4 H12.4 A1 1 0 0 1 13.4 3.4 V10.2 A1 1 0 0 1 12.4 11.2 H1.6 A1 1 0 0 1 0.6 10.2 Z" fill="#98abb7"/></svg><span class="n" style="left:60px">goods</span></div>
<div class="trow" style="top:450.05px"><svg width="5.4" height="7.4" viewBox="0 0 6 8" style="left:26.5px;top:5.9px"><path d="M0.8 0.8 L5 4 L0.8 7.2 Z" fill="#c4c4c4"/></svg><svg width="14" height="12" viewBox="0 0 14 12" style="left:40px;top:3.6px"><path d="M0.6 1.8 A1 1 0 0 1 1.6 0.8 H5.2 L6.8 2.4 H12.4 A1 1 0 0 1 13.4 3.4 V10.2 A1 1 0 0 1 12.4 11.2 H1.6 A1 1 0 0 1 0.6 10.2 Z" fill="#98abb7"/></svg><span class="n" style="left:60px">house</span></div>
<div class="trow" style="top:470.50px"><svg width="7.4" height="5.4" viewBox="0 0 8 6" style="left:25.0px;top:7px"><path d="M0.8 0.8 L7.2 0.8 L4 5 Z" fill="#c4c4c4"/></svg><svg width="15" height="12" viewBox="0 0 15 12" style="left:40px;top:3.6px"><path d="M0.6 1.8 A1 1 0 0 1 1.6 0.8 H5.2 L6.8 2.4 H12 A1 1 0 0 1 13 3.4 V4.4 H3.6 L0.6 10.6 Z" fill="#98abb7"/><path d="M3.4 4.6 H14.6 L12.2 11.2 H0.8 Z" fill="#98abb7"/></svg><span class="n" style="left:60px">index</span></div>
<div class="trow" style="top:490.95px"><svg width="5.4" height="7.4" viewBox="0 0 6 8" style="left:34px;top:5.9px"><path d="M0.8 0.8 L5 4 L0.8 7.2 Z" fill="#c4c4c4"/></svg><svg width="14" height="12" viewBox="0 0 14 12" style="left:48px;top:3.6px"><path d="M0.6 1.8 A1 1 0 0 1 1.6 0.8 H5.2 L6.8 2.4 H12.4 A1 1 0 0 1 13.4 3.4 V10.2 A1 1 0 0 1 12.4 11.2 H1.6 A1 1 0 0 1 0.6 10.2 Z" fill="#cddc39"/><path d="M7 4.6 H10.2 V7.6 H7 Z M10.6 5.6 H13.8 V8.8 H10.6 Z M7 8 H10.2 V11.6 H7 Z M10.6 9.2 H13.8 V11.6 H10.6 Z" fill="#f2f6c0"/></svg><span class="n" style="left:67.5px">components</span></div>
<div class="trow" style="top:511.40px"><svg width="12" height="12" viewBox="0 0 12 12" style="left:48.5px;top:4.2px"><rect x="0" y="0" width="11.6" height="11.8" rx=".8" fill="#ffca28"/><text x="3" y="10.6" font-family="Liberation Sans,sans-serif" font-size="7" font-weight="bold" fill="#5a4700">JS</text></svg><span class="n" style="left:67.5px">about-us.js</span></div>
<div class="trow" style="top:531.85px"><svg width="16" height="12" viewBox="0 0 16 12" style="left:46.5px;top:4.2px"><path d="M4 0.8 C2.2 0.8 2.8 3 2.6 4.4 C2.5 5.4 1.6 5.8 0.8 6 C1.6 6.2 2.5 6.6 2.6 7.6 C2.8 9 2.2 11.2 4 11.2 M12 0.8 C13.8 0.8 13.2 3 13.4 4.4 C13.5 5.4 14.4 5.8 15.2 6 C14.4 6.2 13.5 6.6 13.4 7.6 C13.2 9 13.8 11.2 12 11.2" fill="none" stroke="#f5bf36" stroke-width="1.3"/><path d="M5.4 8 H6.4 M7.5 8 H8.5 M9.6 8 H10.6" stroke="#f5bf36" stroke-width="1.2"/></svg><span class="n" style="left:67.5px">about-us.json</span></div>
<div class="trow" style="top:552.30px"><svg width="10.6" height="13" viewBox="0 0 12 14" preserveAspectRatio="none" style="left:48.5px;top:3.4px"><path d="M1.6 0.6 H7.6 L11.4 4.4 V12.4 A1 1 0 0 1 10.4 13.4 H1.6 A1 1 0 0 1 0.6 12.4 V1.6 A1 1 0 0 1 1.6 0.6 Z" fill="#8bc34a"/><path d="M7.4 0.8 V4.6 H11.2" fill="none" stroke="#3a5a1c" stroke-width=".7"/><path d="M5 7.4 L3.2 9.2 L5 11 M7 7.4 L8.8 9.2 L7 11" fill="none" stroke="#24401a" stroke-width="1.1"/></svg><span class="n" style="left:67.5px">about-us.wxml</span></div>
<div class="trow" style="top:572.75px"><svg width="14" height="13" viewBox="0 0 14 13" style="left:47.5px;top:3.8px"><path d="M1.6 0.6 H13.4 L12.8 3 H4.8 L4.5 4.6 H12.4 L11.2 10.6 L6.4 12.4 L1.6 10.6 L2.1 8.2 H4.4 L4.2 9.2 L6.8 10.2 L9.4 9.2 L9.8 7 H1.8 L2.9 1.8 Z" fill="#42a5f5"/></svg><span class="n" style="left:67.5px">about-us.wxss</span></div>
<div class="trow" style="top:593.20px"><svg width="12" height="12" viewBox="0 0 12 12" style="left:48.5px;top:4.2px"><rect x="0" y="0" width="11.6" height="11.8" rx=".8" fill="#ffca28"/><text x="3" y="10.6" font-family="Liberation Sans,sans-serif" font-size="7" font-weight="bold" fill="#5a4700">JS</text></svg><span class="n" style="left:67.5px">agent-detail.js</span></div>
<div class="trow" style="top:613.65px"><svg width="16" height="12" viewBox="0 0 16 12" style="left:46.5px;top:4.2px"><path d="M4 0.8 C2.2 0.8 2.8 3 2.6 4.4 C2.5 5.4 1.6 5.8 0.8 6 C1.6 6.2 2.5 6.6 2.6 7.6 C2.8 9 2.2 11.2 4 11.2 M12 0.8 C13.8 0.8 13.2 3 13.4 4.4 C13.5 5.4 14.4 5.8 15.2 6 C14.4 6.2 13.5 6.6 13.4 7.6 C13.2 9 13.8 11.2 12 11.2" fill="none" stroke="#f5bf36" stroke-width="1.3"/><path d="M5.4 8 H6.4 M7.5 8 H8.5 M9.6 8 H10.6" stroke="#f5bf36" stroke-width="1.2"/></svg><span class="n" style="left:67.5px">agent-detail.json</span></div>
<div class="trow" style="top:634.10px"><svg width="10.6" height="13" viewBox="0 0 12 14" preserveAspectRatio="none" style="left:48.5px;top:3.4px"><path d="M1.6 0.6 H7.6 L11.4 4.4 V12.4 A1 1 0 0 1 10.4 13.4 H1.6 A1 1 0 0 1 0.6 12.4 V1.6 A1 1 0 0 1 1.6 0.6 Z" fill="#8bc34a"/><path d="M7.4 0.8 V4.6 H11.2" fill="none" stroke="#3a5a1c" stroke-width=".7"/><path d="M5 7.4 L3.2 9.2 L5 11 M7 7.4 L8.8 9.2 L7 11" fill="none" stroke="#24401a" stroke-width="1.1"/></svg><span class="n" style="left:67.5px">agent-detail.wxml</span></div>
<div class="trow" style="top:654.55px"><svg width="14" height="13" viewBox="0 0 14 13" style="left:47.5px;top:3.8px"><path d="M1.6 0.6 H13.4 L12.8 3 H4.8 L4.5 4.6 H12.4 L11.2 10.6 L6.4 12.4 L1.6 10.6 L2.1 8.2 H4.4 L4.2 9.2 L6.8 10.2 L9.4 9.2 L9.8 7 H1.8 L2.9 1.8 Z" fill="#42a5f5"/></svg><span class="n" style="left:67.5px">agent-detail.wxss</span></div>
<div class="trow" style="top:675.00px"><svg width="12" height="12" viewBox="0 0 12 12" style="left:48.5px;top:4.2px"><rect x="0" y="0" width="11.6" height="11.8" rx=".8" fill="#ffca28"/><text x="3" y="10.6" font-family="Liberation Sans,sans-serif" font-size="7" font-weight="bold" fill="#5a4700">JS</text></svg><span class="n" style="left:67.5px">agent-list.js</span></div>
<div class="trow" style="top:695.45px"><svg width="16" height="12" viewBox="0 0 16 12" style="left:46.5px;top:4.2px"><path d="M4 0.8 C2.2 0.8 2.8 3 2.6 4.4 C2.5 5.4 1.6 5.8 0.8 6 C1.6 6.2 2.5 6.6 2.6 7.6 C2.8 9 2.2 11.2 4 11.2 M12 0.8 C13.8 0.8 13.2 3 13.4 4.4 C13.5 5.4 14.4 5.8 15.2 6 C14.4 6.2 13.5 6.6 13.4 7.6 C13.2 9 13.8 11.2 12 11.2" fill="none" stroke="#f5bf36" stroke-width="1.3"/><path d="M5.4 8 H6.4 M7.5 8 H8.5 M9.6 8 H10.6" stroke="#f5bf36" stroke-width="1.2"/></svg><span class="n" style="left:67.5px">agent-list.json</span></div>
<div class="trow" style="top:715.90px"><svg width="10.6" height="13" viewBox="0 0 12 14" preserveAspectRatio="none" style="left:48.5px;top:3.4px"><path d="M1.6 0.6 H7.6 L11.4 4.4 V12.4 A1 1 0 0 1 10.4 13.4 H1.6 A1 1 0 0 1 0.6 12.4 V1.6 A1 1 0 0 1 1.6 0.6 Z" fill="#8bc34a"/><path d="M7.4 0.8 V4.6 H11.2" fill="none" stroke="#3a5a1c" stroke-width=".7"/><path d="M5 7.4 L3.2 9.2 L5 11 M7 7.4 L8.8 9.2 L7 11" fill="none" stroke="#24401a" stroke-width="1.1"/></svg><span class="n" style="left:67.5px">agent-list.wxml</span></div>
<div class="trow" style="top:736.35px"><svg width="14" height="13" viewBox="0 0 14 13" style="left:47.5px;top:3.8px"><path d="M1.6 0.6 H13.4 L12.8 3 H4.8 L4.5 4.6 H12.4 L11.2 10.6 L6.4 12.4 L1.6 10.6 L2.1 8.2 H4.4 L4.2 9.2 L6.8 10.2 L9.4 9.2 L9.8 7 H1.8 L2.9 1.8 Z" fill="#42a5f5"/></svg><span class="n" style="left:67.5px">agent-list.wxss</span></div>
<div class="abs" style="left:232.5px;top:28px;width:1px;height:730px;background:#282828"></div>
<div class="abs" style="left:26.5px;top:266.0px;width:1px;height:81.8px;background:#555"></div>
</div>
<div id="tabs" class="abs">
<div class="abs" style="left:0;top:0;width:111px;height:27.5px;background:#373737"></div>
<div class="abs" style="left:111.5px;top:0;width:112.5px;height:27.5px;background:#2e2e2e"></div>
<svg width="12" height="12" viewBox="0 0 12 12" style="left:11.5px;top:8.5px"><rect x="0" y="0" width="11.6" height="11.8" rx=".8" fill="#ffca28"/><text x="3" y="10.6" font-family="Liberation Sans,sans-serif" font-size="7" font-weight="bold" fill="#5a4700">JS</text></svg>
<span class="t" style="left:30.5px;top:7.8px;font-size:12.2px;line-height:14px;color:#b8b8b8">siteinfo.js</span>
<svg width="10.8" height="13.2" viewBox="0 0 12 14" preserveAspectRatio="none" style="left:123.5px;top:7.5px"><path d="M1.6 0.6 H7.6 L11.4 4.4 V12.4 A1 1 0 0 1 10.4 13.4 H1.6 A1 1 0 0 1 0.6 12.4 V1.6 A1 1 0 0 1 1.6 0.6 Z" fill="#8bc34a"/><path d="M7.4 0.8 V4.6 H11.2" fill="none" stroke="#3a5a1c" stroke-width=".7"/><path d="M5 7.4 L3.2 9.2 L5 11 M7 7.4 L8.8 9.2 L7 11" fill="none" stroke="#24401a" stroke-width="1.1"/></svg>
<span class="t" style="left:141.5px;top:7.8px;font-size:12.2px;line-height:14px;color:#fff;font-style:italic">auth.wxml</span>
<svg width="10" height="10" viewBox="0 0 10 10" style="left:203px;top:9.8px"><path d="M1 1 L9 9 M9 1 L1 9" stroke="#f0f0f0" stroke-width="1.3"/></svg>
</div>
<div id="crumbs" class="abs">
<svg width="12" height="10" viewBox="0 0 12 10" style="left:9px;top:6.2px"><path d="M2.6 1 H12 M2.6 3.7 H12 M2.6 6.4 H12 M2.6 9.1 H12" stroke="#b0b0b0" stroke-width="1"/><path d="M0 1 H1.4 M0 3.7 H1.4 M0 6.4 H1.4 M0 9.1 H1.4" stroke="#b0b0b0" stroke-width="1"/></svg>
<svg width="10" height="13" viewBox="0 0 10 13" style="left:37.5px;top:4.5px"><path d="M1 0.8 H9 V12 L5 8.6 L1 12 Z" fill="none" stroke="#c0c0c0" stroke-width="1.2"/></svg>
<svg width="13" height="10" viewBox="0 0 13 10" style="left:64px;top:6.2px"><path d="M12.6 5 H1.4 M5.4 1 L1.2 5 L5.4 9" fill="none" stroke="#b0b0b0" stroke-width="1.1"/></svg>
<svg width="13" height="10" viewBox="0 0 13 10" style="left:90px;top:6.2px"><path d="M0.4 5 H11.6 M7.6 1 L11.8 5 L7.6 9" fill="none" stroke="#b0b0b0" stroke-width="1.1"/></svg>
<span class="t" style="left:118px;top:4.5px;font-size:12.2px;line-height:14px;color:#8c8c8c">pages</span>
<svg width="6" height="10" viewBox="0 0 6 10" style="left:153.5px;top:6.2px"><path d="M1 1 L5 5 L1 9" fill="none" stroke="#9a9a9a" stroke-width="1.1"/></svg>
<span class="t" style="left:164.8px;top:4.5px;font-size:12.2px;line-height:14px;color:#8c8c8c">auth</span>
<svg width="6" height="10" viewBox="0 0 6 10" style="left:193.5px;top:6.2px"><path d="M1 1 L5 5 L1 9" fill="none" stroke="#9a9a9a" stroke-width="1.1"/></svg>
<svg width="10.8" height="13.2" viewBox="0 0 12 14" preserveAspectRatio="none" style="left:205.5px;top:3.9px"><path d="M1.6 0.6 H7.6 L11.4 4.4 V12.4 A1 1 0 0 1 10.4 13.4 H1.6 A1 1 0 0 1 0.6 12.4 V1.6 A1 1 0 0 1 1.6 0.6 Z" fill="#8bc34a"/><path d="M7.4 0.8 V4.6 H11.2" fill="none" stroke="#3a5a1c" stroke-width=".7"/><path d="M5 7.4 L3.2 9.2 L5 11 M7 7.4 L8.8 9.2 L7 11" fill="none" stroke="#24401a" stroke-width="1.1"/></svg>
<span class="t" style="left:224px;top:4.5px;font-size:12.2px;line-height:14px;color:#c8c8c8">auth.wxml</span>
<svg width="6" height="10" viewBox="0 0 6 10" style="left:282.5px;top:6.2px"><path d="M1 1 L5 5 L1 9" fill="none" stroke="#9a9a9a" stroke-width="1.1"/></svg>
<svg width="14" height="12" viewBox="0 0 14 12" style="left:294px;top:4.9px"><path d="M1 3.4 L8.6 0.8 L13 3.2 V8.4 L5.6 11.2 L1 8.6 Z M1 3.4 L5.6 6 L13 3.2 M5.6 6 V11.2" fill="none" stroke="#6fb3e0" stroke-width="1"/></svg>
<span class="t" style="left:313.7px;top:4.5px;font-size:12.2px;line-height:14px;color:#b4b4b4">view.container</span>
</div>
<div class="abs" style="left:656px;top:125.8px;width:880px;height:3.2px;background:linear-gradient(#1f1f1f,#232323 35%,rgba(35,35,35,0))"></div>
<div id="code" class="abs">
<div class="ln" style="top:0.00px"><span class="no">9</span><i class="gd" style="left:63.90px"></i><i class="gd" style="left:78.20px"></i><span class="cd" style="left:93.00px"><span class="c">&lt;/view&gt;</span></span></div>
<div class="ln" style="top:17.65px"><span class="no">10</span><i class="gd" style="left:63.90px"></i><i class="gd" style="left:78.20px"></i><span class="cd" style="left:93.00px"><span class="c">&lt;view class="sunui-auth-btn"&gt;</span></span></div>
<div class="ln" style="top:35.30px"><span class="no">11</span><i class="gd" style="left:63.90px"></i><i class="gd" style="left:78.20px"></i><i class="gd" style="left:92.50px"></i><i class="gd" style="left:106.80px"></i><span class="cd" style="left:121.60px"><span class="c">&lt;button bindtap="__e" data-event-opts="</span><span class="b2">{</span><span class="b3">{</span><span class="c">[ [ 'tap',[ [ 'getUserProfile',['$event'] ] ] ] ]</span><span class="b3">}</span><span class="b2">}</span><span class="c">" hoverClass="</span></span></div>
<div class="ln" style="top:52.95px"><span class="no">12</span><i class="gd" style="left:63.90px"></i><i class="gd" style="left:78.20px"></i><i class="gd" style="left:92.50px"></i><i class="gd" style="left:106.80px"></i><span class="cd" style="left:121.60px"><span class="c">&lt;button bindtap="__e" data-event-opts="</span><span class="b2">{</span><span class="b3">{</span><span class="c">[ [ 'tap',[ [ 'handleUnAuth',['$event'] ] ] ] ]</span><span class="b3">}</span><span class="b2">}</span><span class="c">" hoverClass="su</span></span></div>
<div class="ln" style="top:70.60px"><span class="no">13</span><i class="gd" style="left:63.90px"></i><i class="gd" style="left:78.20px"></i><span class="cd" style="left:93.00px"><span class="c">&lt;/view&gt;</span></span></div>
<div class="ln" style="top:88.25px"><span class="no">14</span><span class="cd" style="left:64.40px"><span class="c">&lt;/view&gt; </span><span class="b1">--&gt;</span></span></div>
<div class="ln" style="top:105.90px"><span class="no">15</span><svg width="10" height="6" viewBox="0 0 10 6" style="left:47px;top:5.5px"><path d="M0.8 0.8 L5 5 L9.2 0.8" fill="none" stroke="#c4c4c4" stroke-width="1.2"/></svg><span class="cd" style="left:64.40px"><span class="tg">&lt;view</span><span class="at"> class</span><span class="pu">="</span><span class="st">container</span><span class="pu">"</span><span class="pu">&gt;</span></span></div>
<div class="ln" style="top:123.55px"><span class="no">16</span><svg width="10" height="6" viewBox="0 0 10 6" style="left:47px;top:5.5px"><path d="M0.8 0.8 L5 5 L9.2 0.8" fill="none" stroke="#c4c4c4" stroke-width="1.2"/></svg><i class="gd" style="left:63.90px"></i><i class="gd" style="left:78.20px"></i><span class="cd" style="left:93.00px"><span class="tg">&lt;form</span><span class="at"> </span><span class="at"> bindsubmit</span><span class="pu">="</span><span class="st">savepubinfo</span><span class="pu">"</span><span class="pu">&gt;</span></span></div>
<div class="ln" style="top:141.20px"><span class="no">17</span><i class="gd" style="left:63.90px"></i><i class="gd" style="left:78.20px"></i><i class="gd" style="left:92.50px"></i><i class="gd" style="left:106.80px"></i><span class="cd" style="left:121.60px"><span class="tg">&lt;view</span><span class="at"> bindtap</span><span class="pu">="</span><span class="st"></span><span class="pu">"</span><span class="at"> class</span><span class="pu">="</span><span class="st">register</span><span class="pu">"</span><span class="pu">&gt;</span><span class="tg">&lt;/view&gt;</span></span></div>
<div class="ln" style="top:158.85px"><span class="no">18</span><i class="gd" style="left:63.90px"></i><i class="gd" style="left:78.20px"></i><i class="gd" style="left:92.50px"></i><i class="gd" style="left:106.80px"></i><span class="cd" style="left:121.60px"><span class="tg">&lt;view</span><span class="at"> class</span><span class="pu">="</span><span class="st">login</span><span class="pu">"</span><span class="pu">&gt;</span><span class="cj ">完善资料</span><span class="tg">&lt;/view&gt;</span></span></div>
<div class="ln" style="top:176.50px"><span class="no">19</span><svg width="10" height="6" viewBox="0 0 10 6" style="left:47px;top:5.5px"><path d="M0.8 0.8 L5 5 L9.2 0.8" fill="none" stroke="#c4c4c4" stroke-width="1.2"/></svg><i class="gd" style="left:63.90px"></i><i class="gd" style="left:78.20px"></i><i class="gd" style="left:92.50px"></i><i class="gd" style="left:106.80px"></i><span class="cd" style="left:121.60px"><span class="tg">&lt;button</span><span class="at"> bind:chooseavatar</span><span class="pu">="</span><span class="st">onChooseAvatar</span><span class="pu">"</span><span class="at"> style</span><span class="pu">="</span><span class="st">margin-left: auto;margin-right: auto;</span><span class="pu">"</span><span class="at"> </span><span class="at"> class</span><span class="pu">="</span><span class="st">avatar-wr</span></span></div>
<div class="ln" style="top:194.15px"><span class="no">20</span><i class="gd" style="left:63.90px"></i><i class="gd" style="left:78.20px"></i><i class="gd" style="left:92.50px"></i><i class="gd" style="left:106.80px"></i><i class="gd" style="left:121.10px"></i><i class="gd" style="left:135.40px"></i><span class="cd" style="left:150.20px"><span class="tg">&lt;image</span><span class="at"> class</span><span class="pu">="</span><span class="st">avatar2</span><span class="pu">"</span><span class="at"> src</span><span class="pu">="</span><span class="ul" style="text-decoration-color:#9a9a9a"><span class="b1">{</span><span class="b2">{</span><span class="at">avatarUrl</span><span class="b1">?</span><span class="at">avatarUrl:defaultAvatarUrl2</span><span class="b2">}</span><span class="b1">}</span></span><span class="pu">"&gt;</span><span class="tg">&lt;/image&gt;</span></span></div>
<div class="ln" style="top:211.80px"><span class="no">21</span><i class="gd" style="left:63.90px"></i><i class="gd" style="left:78.20px"></i><i class="gd" style="left:92.50px"></i><i class="gd" style="left:106.80px"></i><span class="cd" style="left:121.60px"><span class="tg">&lt;/button&gt;</span></span></div>
<div class="ln" style="top:229.45px"><span class="no">22</span><i class="gd" style="left:63.90px"></i><i class="gd" style="left:78.20px"></i><i class="gd" style="left:92.50px"></i><i class="gd" style="left:106.80px"></i><span class="cd" style="left:121.60px"><span class="tg">&lt;view</span><span class="at"> style</span><span class="pu">="</span><span class="st">text-align: center;color: </span><span style="display:inline-block;width:10px;height:10px;background:#f00;border:1px solid #eee;margin:0 3px 0 3px;vertical-align:-1px"></span><span class="st">red;</span><span class="pu">"&gt;</span><span class="cj ">选择或上传头像</span><span class="tg">&lt;/view&gt;</span></span></div>
<div class="ln" style="top:247.10px"><span class="no">23</span><svg width="10" height="6" viewBox="0 0 10 6" style="left:47px;top:5.5px"><path d="M0.8 0.8 L5 5 L9.2 0.8" fill="none" stroke="#c4c4c4" stroke-width="1.2"/></svg><i class="gd" style="left:63.90px"></i><i class="gd" style="left:78.20px"></i><i class="gd" style="left:92.50px"></i><i class="gd" style="left:106.80px"></i><span class="cd" style="left:121.60px"><span class="tg">&lt;view</span><span class="at"> class</span><span class="pu">="</span><span class="st">inputlist</span><span class="pu">"</span><span class="pu">&gt;</span></span></div>
<div class="ln" style="top:264.75px"><span class="no">24</span><svg width="10" height="6" viewBox="0 0 10 6" style="left:47px;top:5.5px"><path d="M0.8 0.8 L5 5 L9.2 0.8" fill="none" stroke="#c4c4c4" stroke-width="1.2"/></svg><i class="gd" style="left:63.90px"></i><i class="gd" style="left:78.20px"></i><i class="gd" style="left:92.50px"></i><i class="gd" style="left:106.80px"></i><i class="gd" style="left:121.10px"></i><i class="gd" style="left:135.40px"></i><span class="cd" style="left:150.20px"><span class="tg">&lt;view</span><span class="at"> class</span><span class="pu">="</span><span class="st">inputitem</span><span class="pu">"</span><span class="pu">&gt;</span></span></div>
<div class="ln" style="top:282.40px"><span class="no">25</span><svg width="10" height="6" viewBox="0 0 10 6" style="left:47px;top:5.5px"><path d="M0.8 0.8 L5 5 L9.2 0.8" fill="none" stroke="#c4c4c4" stroke-width="1.2"/></svg><i class="gd" style="left:63.90px"></i><i class="gd" style="left:78.20px"></i><i class="gd" style="left:92.50px"></i><i class="gd" style="left:106.80px"></i><i class="gd" style="left:121.10px"></i><i class="gd" style="left:135.40px"></i><i class="gd" style="left:149.70px"></i><i class="gd" style="left:164.00px"></i><span class="cd" style="left:178.80px"><span class="tg">&lt;view&gt;</span></span></div>
<div class="ln" style="top:300.05px"><span class="no">26</span><i class="gd" style="left:63.90px"></i><i class="gd" style="left:78.20px"></i><i class="gd" style="left:92.50px"></i><i class="gd" style="left:106.80px"></i><i class="gd" style="left:121.10px"></i><i class="gd" style="left:135.40px"></i><i class="gd" style="left:149.70px"></i><i class="gd" style="left:164.00px"></i><i class="gd" style="left:178.30px"></i><i class="gd" style="left:192.60px"></i><span class="cd" style="left:207.40px"><span class="tg">&lt;image</span><span class="at"> src</span><span class="pu">="</span><span class="st ul">../../resource/images/username.png</span><span class="pu">"&gt;</span><span class="tg">&lt;/image&gt;</span></span></div>
<div class="ln" style="top:317.70px"><span class="no">27</span><i class="gd" style="left:63.90px"></i><i class="gd" style="left:78.20px"></i><i class="gd" style="left:92.50px"></i><i class="gd" style="left:106.80px"></i><i class="gd" style="left:121.10px"></i><i class="gd" style="left:135.40px"></i><i class="gd" style="left:149.70px"></i><i class="gd" style="left:164.00px"></i><span class="cd" style="left:178.80px"><span class="tg">&lt;/view&gt;</span></span></div>
<div class="ln" style="top:335.35px"><span class="no">28</span><svg width="10" height="6" viewBox="0 0 10 6" style="left:47px;top:5.5px"><path d="M0.8 0.8 L5 5 L9.2 0.8" fill="none" stroke="#c4c4c4" stroke-width="1.2"/></svg><i class="gd" style="left:63.90px"></i><i class="gd" style="left:78.20px"></i><i class="gd" style="left:92.50px"></i><i class="gd" style="left:106.80px"></i><i class="gd" style="left:121.10px"></i><i class="gd" style="left:135.40px"></i><i class="gd" style="left:149.70px"></i><i class="gd" style="left:164.00px"></i><span class="cd" style="left:178.80px"><span class="tg">&lt;view&gt;</span></span></div>
<div class="ln" style="top:353.00px"><span class="no">29</span><i class="gd" style="left:63.90px"></i><i class="gd" style="left:78.20px"></i><i class="gd" style="left:92.50px"></i><i class="gd" style="left:106.80px"></i><i class="gd" style="left:121.10px"></i><i class="gd" style="left:135.40px"></i><i class="gd" style="left:149.70px"></i><i class="gd" style="left:164.00px"></i><i class="gd" style="left:178.30px"></i><i class="gd" style="left:192.60px"></i><span class="cd" style="left:207.40px"><span class="tg">&lt;input</span><span class="at"> name</span><span class="pu">="</span><span class="st">nickname</span><span class="pu">"</span><span class="at"> placeholder</span><span class="pu">="</span><span class="cj st">请输入昵称</span><span class="pu">"</span><span class="at"> placeholderStyle</span><span class="pu">="</span><span class="st">font-size:14px;</span><span class="pu">"</span><span class="at"> type</span><span class="pu">="</span><span class="st">nickna</span></span></div>
<div class="ln" style="top:370.65px"><span class="no">30</span><i class="gd" style="left:63.90px"></i><i class="gd" style="left:78.20px"></i><i class="gd" style="left:92.50px"></i><i class="gd" style="left:106.80px"></i><i class="gd" style="left:121.10px"></i><i class="gd" style="left:135.40px"></i><i class="gd" style="left:149.70px"></i><i class="gd" style="left:164.00px"></i><span class="cd" style="left:178.80px"><span class="tg">&lt;/view&gt;</span></span></div>
<div class="ln" style="top:388.30px"><span class="no">31</span><i class="gd" style="left:63.90px"></i><i class="gd" style="left:78.20px"></i><i class="gd" style="left:92.50px"></i><i class="gd" style="left:106.80px"></i><i class="gd" style="left:121.10px"></i><i class="gd" style="left:135.40px"></i><span class="cd" style="left:150.20px"><span class="tg">&lt;/view&gt;</span></span></div>
<div class="ln" style="top:405.95px"><span class="no">32</span><svg width="10" height="6" viewBox="0 0 10 6" style="left:47px;top:5.5px"><path d="M0.8 0.8 L5 5 L9.2 0.8" fill="none" stroke="#c4c4c4" stroke-width="1.2"/></svg><i class="gd" style="left:63.90px"></i><i class="gd" style="left:78.20px"></i><i class="gd" style="left:92.50px"></i><i class="gd" style="left:106.80px"></i><i class="gd" style="left:121.10px"></i><i class="gd" style="left:135.40px"></i><span class="cd" style="left:150.20px"><span class="tg">&lt;view</span><span class="at"> class</span><span class="pu">="</span><span class="st">button</span><span class="pu">"</span><span class="pu">&gt;</span></span></div>
<div class="ln" style="top:423.60px"><span class="no">33</span><i class="gd" style="left:63.90px"></i><i class="gd" style="left:78.20px"></i><i class="gd" style="left:92.50px"></i><i class="gd" style="left:106.80px"></i><i class="gd" style="left:121.10px"></i><i class="gd" style="left:135.40px"></i><i class="gd" style="left:149.70px"></i><i class="gd" style="left:164.00px"></i><span class="cd" style="left:178.80px"><span class="tg">&lt;button</span><span class="at"> style</span><span class="pu">="</span><span class="st">margin-left: auto;margin-right: auto;</span><span class="pu">"</span><span class="at"> formType</span><span class="pu">="</span><span class="st">submit</span><span class="pu">"</span><span class="pu">&gt;</span><span class="cj ">提交绑定</span><span class="tg">&lt;/button&gt;</span></span></div>
<div class="ln" style="top:441.25px"><span class="no">34</span><i class="gd" style="left:63.90px"></i><i class="gd" style="left:78.20px"></i><i class="gd" style="left:92.50px"></i><i class="gd" style="left:106.80px"></i><i class="gd" style="left:121.10px"></i><i class="gd" style="left:135.40px"></i><span class="cd" style="left:150.20px"><span class="tg">&lt;/view&gt;</span></span></div>
<div class="ln" style="top:458.90px"><span class="no">35</span><i class="gd" style="left:63.90px"></i><i class="gd" style="left:78.20px"></i><i class="gd" style="left:92.50px"></i><i class="gd" style="left:106.80px"></i><span class="cd" style="left:121.60px"><span class="tg">&lt;/view&gt;</span></span></div>
<div class="ln" style="top:476.55px"><span class="no">36</span><i class="gd" style="left:63.90px"></i><i class="gd" style="left:78.20px"></i><span class="cd" style="left:93.00px"><span class="tg">&lt;/form&gt;</span></span></div>
<div class="ln" style="top:494.20px"><i style="position:absolute;left:64.4px;top:0;right:0;height:17.65px;background:#464646"></i><span class="no" style="color:#e4e4e4;-webkit-text-stroke-width:0.15px">37</span><span class="cd" style="left:64.40px"><span class="bx"><span class="tg">&lt;</span></span><span class="tg">/view</span><span class="bx"><span class="tg">&gt;</span></span></span></div>
<div class="ln" style="top:511.85px"><span class="no">38</span><span class="cd" style="left:64.40px"></span></div>
</div>
<div id="dbg" class="abs">
<div class="abs" style="left:0;top:0;width:880px;height:1px;background:#454545"></div>
<span class="t" style="left:19.4px;top:9px;font-size:10.4px;line-height:14px;color:#f0f0f0">调试器</span>
<div class="abs" style="left:19px;top:26.8px;width:32px;height:1px;background:#e0e0e0"></div>
<div class="abs" style="left:57.8px;top:7.7px;width:30.4px;height:15.5px;border-radius:8px;background:#4b4b4b"></div>
<span class="t" style="left:57.8px;width:30.4px;text-align:center;top:8.9px;font-size:10.6px;line-height:13px;color:#e8e8e8">1, 45</span>
<span class="t" style="left:107px;top:9px;font-size:10.4px;line-height:14px;color:#9a9a9a">问题</span>
<span class="t" style="left:146px;top:9px;font-size:10.4px;line-height:14px;color:#9a9a9a">输出</span>
<span class="t" style="left:185px;top:9px;font-size:10.4px;line-height:14px;color:#9a9a9a">终端</span>
<span class="t" style="left:224px;top:9px;font-size:10.4px;line-height:14px;color:#9a9a9a">代码质量</span>
<div class="abs" style="left:0;top:28.2px;width:880px;height:24.3px;background:#292a2d;border-bottom:1px solid #3c3c3c"></div>
<svg width="14" height="14" viewBox="0 0 14 14" style="left:9.5px;top:33.5px"><path d="M11.4 5 V2 A1 1 0 0 0 10.4 1 H2 A1 1 0 0 0 1 2 V10.4 A1 1 0 0 0 2 11.4 H5" fill="none" stroke="#9aa0a6" stroke-width="1.1"/><path d="M6.4 6.2 L13 8.8 L10.2 9.9 L12.6 12.6 L11.6 13.4 L9.2 10.7 L7.6 13 Z" fill="#9aa0a6"/></svg>
<div class="abs" style="left:32.5px;top:32.5px;width:1px;height:15px;background:#45474a"></div>
<div class="abs" style="left:89px;top:28.2px;width:61.5px;height:23.8px;background:#000"></div>
<span class="t" style="left:49px;top:33.8px;font-size:11.15px;line-height:14px;color:#d2d4d8">Wxml</span>
<span class="t" style="left:99px;top:33.8px;font-size:11.15px;line-height:14px;color:#f2f2f2">Console</span>
<span class="t" style="left:161px;top:33.8px;font-size:11.15px;line-height:14px;color:#d2d4d8">Sources</span>
<span class="t" style="left:222px;top:33.8px;font-size:11.15px;line-height:14px;color:#d2d4d8">Network</span>
<span class="t" style="left:286px;top:33.8px;font-size:11.15px;line-height:14px;color:#d2d4d8">Performance</span>
<span class="t" style="left:371px;top:33.8px;font-size:11.15px;line-height:14px;color:#d2d4d8">Memory</span>
<span class="t" style="left:434px;top:33.8px;font-size:11.15px;line-height:14px;color:#d2d4d8">AppData</span>
<span class="t" style="left:498px;top:33.8px;font-size:11.15px;line-height:14px;color:#d2d4d8">Storage</span>
<span class="t" style="left:559px;top:33.8px;font-size:11.15px;line-height:14px;color:#d2d4d8">Security</span>
<span class="t" style="left:629px;top:33.8px;font-size:11.15px;line-height:14px;color:#d2d4d8">Sensor</span>
<span class="t" style="left:684px;top:33.8px;font-size:11.15px;line-height:14px;color:#d2d4d8">Mock</span>
<span class="t" style="left:733px;top:33.8px;font-size:11.15px;line-height:14px;color:#d2d4d8">Audits</span>
<span class="t" style="left:786px;top:33.8px;font-size:11.15px;line-height:14px;color:#d2d4d8">Vulnerability</span>
<div class="abs" style="left:0;top:52.5px;width:880px;height:24.5px;background:#292a2d"></div>
<svg width="14" height="12" viewBox="0 0 14 12" style="left:8.5px;top:59.5px"><rect x="0.7" y="0.7" width="12.6" height="10.6" fill="none" stroke="#9aa0a6" stroke-width="1.1"/><path d="M4.4 0.7 V11.3" stroke="#9aa0a6" stroke-width="1.1"/><path d="M6.8 3.6 L10.2 6 L6.8 8.4 Z" fill="#9aa0a6"/></svg>
<svg width="13" height="13" viewBox="0 0 13 13" style="left:36px;top:59px"><circle cx="6.5" cy="6.5" r="5.3" fill="none" stroke="#9aa0a6" stroke-width="1.3"/><path d="M2.8 2.8 L10.2 10.2" stroke="#9aa0a6" stroke-width="1.3"/></svg>
<div class="abs" style="left:59px;top:58px;width:1px;height:16px;background:#45474a"></div>
<span class="t" style="left:68px;top:59px;font-size:11px;line-height:14px;color:#e0e2e6">appservice (#1)</span>
<svg width="7" height="6" viewBox="0 0 7 6" style="left:180px;top:62px"><path d="M0.2 0.4 H6.8 L3.5 5.6 Z" fill="#9aa0a6"/></svg>
<div class="abs" style="left:196.5px;top:58px;width:1px;height:16px;background:#45474a"></div>
<svg width="16" height="11" viewBox="0 0 16 11" style="left:205px;top:60px"><path d="M0.6 5.5 C3 0.4 13 0.4 15.4 5.5 C13 10.6 3 10.6 0.6 5.5 Z" fill="#9aa0a6"/><circle cx="8" cy="5.5" r="2.9" fill="#292a2d"/><circle cx="8" cy="5.5" r="1.5" fill="#9aa0a6"/></svg>
<div class="abs" style="left:229.5px;top:58px;width:1px;height:16px;background:#45474a"></div>
<div class="abs" style="left:236.5px;top:57.5px;width:223.5px;height:18.5px;background:#242527;border:1px solid #3e4042"></div>
<span class="t" style="left:241.5px;top:59.5px;font-size:11.2px;line-height:14px;color:#c8cace">Filter</span>
<span class="t" style="left:468px;top:59px;font-size:11.1px;line-height:14px;color:#d2d4d8">Default levels</span>
<svg width="7" height="6" viewBox="0 0 7 6" style="left:538px;top:62.3px"><path d="M0.2 0.4 H6.8 L3.5 5.6 Z" fill="#9aa0a6"/></svg>
<div class="abs" style="left:0;top:76.6px;width:880px;height:30.2px;background:#332b00;border-top:1px solid #4f4300;border-bottom:1px solid #4f4300"></div>
<svg width="10" height="9.4" viewBox="0 0 11 10" style="left:7px;top:79px"><path d="M5.5 0.4 L10.8 9.6 H0.2 Z" fill="#f2c737"/><path d="M5.5 3.4 V6.6 M5.5 7.4 V8.6" stroke="#332b00" stroke-width="1.1"/></svg>
<span class="t" style="left:23px;top:79px;font-family:'Liberation Mono',monospace;font-size:10.22px;line-height:13.4px;color:#f6f3ea;-webkit-text-stroke-width:0.25px">[pages/user/pub/oldhouse/index] Some selectors are not allowed in component wxss, including tag name selectors, ID selectors, and attribute</span>
<span class="t" style="left:23px;top:92.4px;font-family:'Liberation Mono',monospace;font-size:10.22px;line-height:13.4px;color:#f6f3ea;-webkit-text-stroke-width:0.25px"><span style="text-decoration:underline">b/components/house-stw.wxss:1</span>:1)</span>
<div class="abs" style="left:0;top:106.8px;width:880px;height:32.2px;background:#332b00;border-bottom:1px solid #4f4300"></div>
<svg width="10" height="9.4" viewBox="0 0 11 10" style="left:7px;top:110.6px"><path d="M5.5 0.4 L10.8 9.6 H0.2 Z" fill="#f2c737"/><path d="M5.5 3.4 V6.6 M5.5 7.4 V8.6" stroke="#332b00" stroke-width="1.1"/></svg>
<span class="t" style="left:23px;top:110.8px;font-family:'Liberation Mono',monospace;font-size:10.22px;line-height:13.4px;color:#f6f3ea;-webkit-text-stroke-width:0.25px">[pages/user/pub/oldhouse/index] Some selectors are not allowed in component wxss, including tag name selectors, ID selectors, and attribute</span>
<span class="t" style="left:23px;top:124.3px;font-family:'Liberation Mono',monospace;font-size:10.22px;line-height:13.4px;color:#f6f3ea;-webkit-text-stroke-width:0.25px"><span style="text-decoration:underline">multi-select/index.wxss:1</span>:1)</span>
<div class="abs" style="left:0;top:139px;width:880px;height:36px;background:#242424"></div>
<div class="abs" style="left:0;top:156px;width:880px;height:1px;background:#3a3a3a"></div>
<span class="t" style="left:23px;top:143px;font-family:'Liberation Mono',monospace;font-size:10.22px;line-height:13.4px;color:#f6f3ea;-webkit-text-stroke-width:0.25px;color:#f0f0f0;-webkit-text-stroke-width:0.25px">leave</span>
<svg width="5" height="7" viewBox="0 0 5 7" style="left:25px;top:163.6px"><path d="M0.3 0.3 L4.6 3.5 L0.3 6.7 Z" fill="#8a8a8a"/></svg>
<span class="t" style="left:33px;top:160.6px;font-family:'Liberation Mono',monospace;font-size:10.22px;line-height:13.4px;color:#f6f3ea;-webkit-text-stroke-width:0.25px;font-style:italic;color:#e8e8e8">{id: <span style="color:#f28b54">"1"</span>, name: <span style="color:#f28b54">"<span style="font-family:'Noto Sans CJK SC',sans-serif;font-size:11.2px;-webkit-text-stroke-width:0">播播资源小区</span>"</span>}</span>
<span class="t" style="left:801px;top:160.6px;font-family:'Liberation Mono',monospace;font-size:10.22px;line-height:13.4px;color:#f6f3ea;-webkit-text-stroke-width:0.25px;color:#d8d8d8;text-decoration:underline">vendor.js?t=wechat</span>
</div>
</body></html>
